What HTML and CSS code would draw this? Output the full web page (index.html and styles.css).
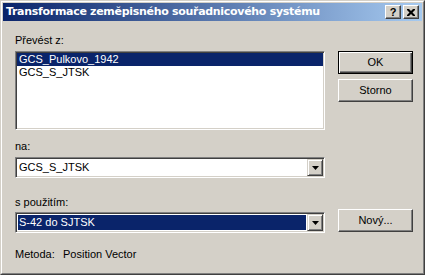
FILE: index.html
```html
<!DOCTYPE html>
<html lang="cs">
<head>
<meta charset="utf-8">
<title>Transformace</title>
<link rel="stylesheet" href="styles.css">
</head>
<body>
<div class="window">
  <div class="window-inner">
    <div class="titlebar">
      <span class="title">Transformace zeměpisného souřadnicového systému</span>
      <div class="tbtns">
        <span class="tbtn help">?</span>
        <span class="tbtn close"><svg width="8" height="7" viewBox="0 0 8 7"><path d="M0 0h2l2 2 2-2h2v1L5.5 3.5 8 6v1H6L4 5 2 7H0V6l2.5-2.5L0 1z" fill="#000"/></svg></span>
      </div>
    </div>
    <div class="content">
      <div class="left">
        <div class="label l1">Převést z:</div>
        <div class="listbox">
          <div class="item sel">GCS_Pulkovo_1942</div>
          <div class="item">GCS_S_JTSK</div>
        </div>
        <div class="label l2">na:</div>
        <div class="combo">
          <div class="field"><span class="ftext">GCS_S_JTSK</span></div>
          <div class="dd"><svg width="7" height="4" viewBox="0 0 7 4"><path d="M0 0h7L3.5 4z" fill="#000"/></svg></div>
        </div>
        <div class="label l3">s použitím:</div>
        <div class="combo c2">
          <div class="field"><span class="ftext selected">S-42 do SJTSK</span></div>
          <div class="dd"><svg width="7" height="4" viewBox="0 0 7 4"><path d="M0 0h7L3.5 4z" fill="#000"/></svg></div>
        </div>
        <div class="method"><span class="mlabel">Metoda:</span><span>Position Vector</span></div>
      </div>
      <div class="right">
        <div class="btn default">OK</div>
        <div class="btn storno">Storno</div>
        <div class="btn novy">Nový...</div>
      </div>
    </div>
  </div>
</div>
</body>
</html>
```
FILE: styles.css
```css
html, body {
  margin: 0;
  padding: 0;
  background: #D4D0C8;
}
body {
  font-family: "Liberation Sans", Arial, sans-serif;
  font-size: 11px;
  color: #000;
}
.window {
  width: 425px;
  height: 275px;
  box-sizing: border-box;
  border: 1px solid;
  border-color: #D4D0C8 #404040 #404040 #D4D0C8;
  background: #D4D0C8;
}
.window-inner {
  height: 100%;
  box-sizing: border-box;
  border: 1px solid;
  border-color: #FFFFFF #808080 #808080 #FFFFFF;
  padding: 1px;
}
.titlebar {
  height: 18px;
  margin-bottom: 1px;
  display: flex;
  align-items: center;
  justify-content: space-between;
  padding: 0 3px 0 3px;
  background: linear-gradient(to right, #0A246A, #A6CAF0);
}
.title {
  color: #fff;
  font-family: "DejaVu Sans", Verdana, sans-serif;
  font-weight: bold;
  font-size: 11px;
  letter-spacing: -0.3px;
  line-height: 18px;
  white-space: nowrap;
}
.tbtns {
  display: flex;
  gap: 2px;
}
.tbtn {
  width: 16px;
  height: 14px;
  box-sizing: border-box;
  background: #D4D0C8;
  border: 1px solid;
  border-color: #FFFFFF #404040 #404040 #FFFFFF;
  box-shadow: inset -1px -1px #808080;
  display: flex;
  align-items: center;
  justify-content: center;
}
.help {
  font-family: "Liberation Sans", Arial, sans-serif;
  font-weight: bold;
  font-size: 11px;
  line-height: 12px;
}
.content {
  display: flex;
  gap: 13px;
  padding-left: 12px;
}
.left {
  width: 310px;
  display: flex;
  flex-direction: column;
}
.label {
  line-height: 13px;
  height: 13px;
}
.l1 { margin-top: 12px; }
.l2 { margin-top: 10px; }
.l3 { margin-top: 18px; }
.listbox {
  margin-top: 4px;
  height: 79px;
  box-sizing: border-box;
  background: #fff;
  border: 1px solid;
  border-color: #808080 #FFFFFF #FFFFFF #808080;
  box-shadow: inset 1px 1px #404040, inset -1px -1px #D4D0C8;
  padding: 1px 1px 1px 1px;
}
.item {
  line-height: 13px;
  height: 13px;
  padding-left: 2px;
  white-space: nowrap;
}
.item.sel {
  background: #0A246A;
  color: #fff;
}
.combo {
  height: 21px;
  box-sizing: border-box;
  margin-top: 4px;
  background: #fff;
  border: 1px solid;
  border-color: #808080 #FFFFFF #FFFFFF #808080;
  box-shadow: inset 1px 1px #404040, inset -1px -1px #D4D0C8;
  padding: 1px;
  display: flex;
}
.c2 { margin-top: 3px; }
.field {
  flex: 1;
  padding: 1px;
  display: flex;
}
.ftext {
  flex: 1;
  line-height: 15px;
  padding-left: 1px;
}
.ftext.selected {
  background: #0A246A;
  color: #fff;
}
.dd {
  width: 16px;
  height: 17px;
  box-sizing: border-box;
  background: #D4D0C8;
  border: 1px solid;
  border-color: #D4D0C8 #404040 #404040 #D4D0C8;
  box-shadow: inset 1px 1px #FFFFFF, inset -1px -1px #808080;
  display: flex;
  align-items: center;
  justify-content: center;
}
.method {
  margin-top: 15px;
  line-height: 13px;
  display: flex;
}
.mlabel {
  width: 48px;
}
.right {
  width: 75px;
  padding-top: 29px;
  display: flex;
  flex-direction: column;
}
.btn {
  height: 23px;
  box-sizing: border-box;
  background: #D4D0C8;
  border: 1px solid;
  border-color: #FFFFFF #404040 #404040 #FFFFFF;
  box-shadow: inset -1px -1px #808080, inset 1px 1px #D4D0C8;
  display: flex;
  align-items: center;
  justify-content: center;
  line-height: 13px;
}
.btn.default {
  border-color: #000;
  box-shadow: inset 1px 1px #FFFFFF, inset -1px -1px #404040, inset -2px -2px #808080;
}
.storno { margin-top: 5px; }
.novy { margin-top: 107px; }
```
